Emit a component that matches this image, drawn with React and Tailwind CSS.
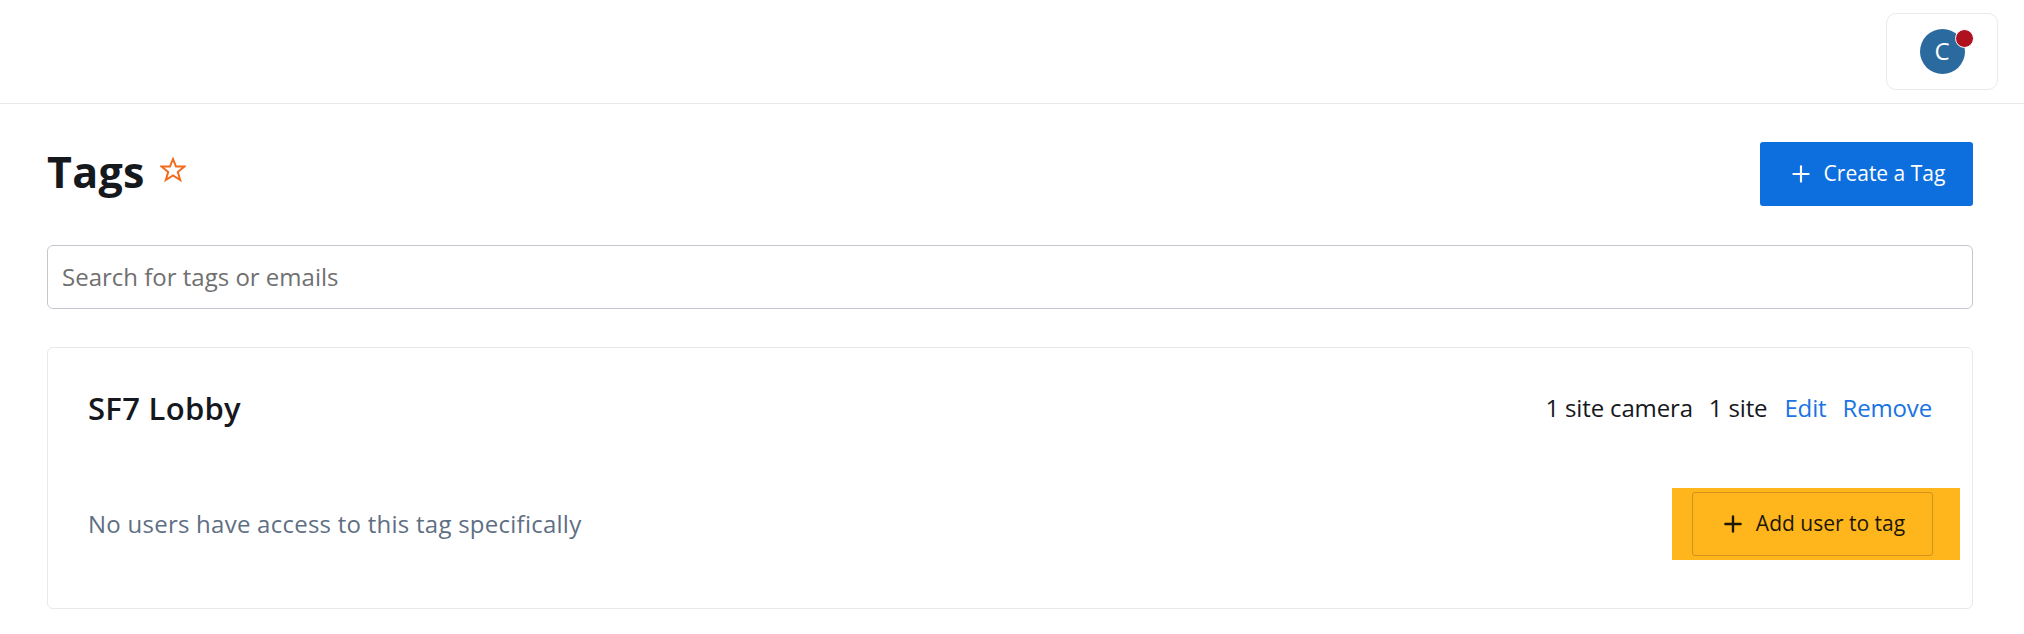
import React from 'react';
import { Plus } from 'lucide-react';

const App = () => {
  return (
    <div className="min-h-[634px] bg-white font-['Open_Sans',sans-serif] text-[#15181d]">
      <header className="h-[104px] border-b border-[#e8e9eb] flex justify-end pt-[13px] pr-[26px]">
        <div className="w-[112px] h-[77px] border border-[#e8e9eb] rounded-[10px] flex items-center justify-center">
          <div className="relative w-[45px] h-[45px] mb-[1px] rounded-full bg-[#2a6a9e] flex items-center justify-center text-white text-[24px]">
            C
            <span className="absolute top-0 -right-[9px] w-[19px] h-[19px] rounded-full bg-[#b0111f] border border-white"></span>
          </div>
        </div>
      </header>

      <main className="pl-[47px] pr-[51px]">
        <div className="flex justify-between items-center pt-[38px]">
          <div className="flex items-center gap-[15px] -mt-[5px]">
            <h1 className="text-[43px] leading-[56px] font-bold tracking-[0.3px]">Tags</h1>
            <svg width="26" height="25" viewBox="0 0 26 25" fill="none" stroke="#f26a1b" strokeWidth="2" className="-mt-[4px]">
              <polygon points="13,2 16,9.5 24.5,9.5 17.8,15 20.2,23 13,18.5 5.8,23 8.2,15 1.5,9.5 10,9.5" />
            </svg>
          </div>
          <button className="w-[213px] h-[64px] bg-[#0d6fde] rounded-[3px] text-white text-[21px] flex items-center justify-center gap-[10px]">
            <Plus size={26} strokeWidth={2} />
            Create a Tag
          </button>
        </div>

        <input
          type="text"
          placeholder="Search for tags or emails"
          className="mt-[39px] w-full h-[64px] px-[14px] pb-[2px] border border-[#c3c8cf] rounded-[6px] text-[24px] outline-none placeholder:text-[#707070]"
        />

        <section className="mt-[38px] h-[262px] border border-[#e8e9eb] rounded-[6px] pl-[40px] pr-[39px]">
          <div className="flex justify-between items-center pt-[34px] h-[86px]">
            <h2 className="text-[31px] font-semibold tracking-[0.3px]">SF7 Lobby</h2>
            <div className="flex items-center gap-[16px] text-[24px] tracking-[-0.15px] pr-[1px]">
              <span>1 site camera</span>
              <span>1 site</span>
              <a className="text-[#1a73e3] ml-[1px]">Edit</a>
              <a className="text-[#1a73e3]">Remove</a>
            </div>
          </div>
          <div className="flex justify-between items-center mt-[54px]">
            <p className="text-[24px] tracking-[0.25px] text-[#5f6f83]">No users have access to this tag specifically</p>
            <div className="bg-[#ffb61c] py-[4px] pl-[20px] pr-[27px] -mr-[27px]">
              <button className="w-[241px] h-[64px] border border-[#cf9419] rounded-[3px] text-[21px] text-[#1c1606] flex items-center justify-center gap-[10px]">
                <Plus size={26} strokeWidth={2.2} />
                Add user to tag
              </button>
            </div>
          </div>
        </section>
      </main>
    </div>
  );
};

export default App;
